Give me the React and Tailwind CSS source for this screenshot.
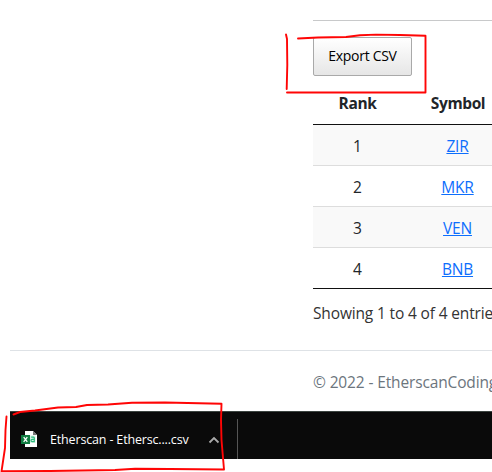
const rows = [
  { rank: 1, symbol: 'ZIR' },
  { rank: 2, symbol: 'MKR' },
  { rank: 3, symbol: 'VEN' },
  { rank: 4, symbol: 'BNB' },
];

function TokenTable() {
  return (
    <div className="w-[190px] border-b border-[#111]">
      <div className="flex h-[49px] items-center border-b border-[#111] pt-[5px] text-[15.5px] font-bold tracking-[-0.4px]">
        <div className="w-[89px] shrink-0 text-center">Rank</div>
        <div className="w-[112px] shrink-0 text-center">Symbol</div>
      </div>
      {rows.map((r, i) => (
        <div
          key={r.rank}
          className={`flex items-center ${i > 0 ? 'h-[41px] border-t border-[#dddddd] pt-px' : 'h-10 pt-0.5'} ${i % 2 === 0 ? 'bg-[#f9f9f9]' : 'bg-white'}`}
        >
          <div className="w-[89px] shrink-0 text-center">{r.rank}</div>
          <div className="w-[111px] shrink-0 text-center tracking-[-0.2px]">
            <a href="#" className="text-[#0d6efd] underline decoration-1 underline-offset-1">{r.symbol}</a>
          </div>
        </div>
      ))}
    </div>
  );
}

function CsvIcon() {
  return (
    <svg width="17" height="17" viewBox="0 0 17 17" className="mt-[3px] shrink-0">
      <path d="M4 0h8l4 4v12H4z" fill="#fff" />
      <path d="M12 0v4h4z" fill="#777" />
      <rect x="9" y="4.500" width="5.500" height="7.500" fill="#d5f2e4" />
      <path d="M10.200 6.200h2.300q.8 0 .8.900v3.500h-2.200q-1.100 0-1.100-1.100t1.100-1.100h2.200" fill="none" stroke="#2dbb7c" strokeWidth="1.200" />
      <rect x="0" y="4" width="9" height="9" fill="#107c41" />
      <path d="M2.700 6.200l3.600 4.600M6.300 6.200l-3.600 4.600" stroke="#fff" strokeWidth="1.300" />
    </svg>
  );
}

function Annotations() {
  return (
    <svg className="pointer-events-none absolute left-0 top-0" width="492" height="472" fill="none" stroke="#ff0505" strokeWidth="1.900" strokeLinecap="round" strokeLinejoin="round">
      <path d="M298 38.500L318 37.500L346 37L360 35.300L376 34.600L400 35L425.500 35.700V92.500H287" />
      <path d="M286 34.500L287 39L287.300 65L286.700 89" />
      <path d="M13.500 414.500L20 412L35 410.500L58 407.500L76 407L87 405L108 404.500L132 402.700L165 402.500L221.500 403.700L221 420L221.500 440L224 469.500L170 469L135 468.800L115 470L50 471L1.500 471.300L5 448L5.500 430L6.500 416.500" />
    </svg>
  );
}

export default function App() {
  return (
    <div className="relative flex h-[472px] w-[492px] flex-col overflow-hidden bg-white font-['Open_Sans','Noto_Sans',sans-serif] text-[15.5px] leading-6 text-[#212529]">
      <main className="ml-[313px] h-[350px] overflow-hidden whitespace-nowrap pt-5">
        <div className="h-px bg-[#c8c9ca]" />
        <button className="mt-4 block h-[39px] w-[99px] rounded-[2px] border border-[#a9a9a9] bg-linear-to-b from-white to-[#e6e6e6] pb-0.5 text-[14px] tracking-[-0.3px] text-black">
          Export CSV
        </button>
        <TokenTable />
        <div className="mt-3 tracking-[-0.15px] text-[#333]">Showing 1 to 4 of 4 entries</div>
      </main>
      <footer className="ml-[10px] h-[61px] shrink-0 overflow-hidden whitespace-nowrap border-t border-[#dee2e6] pl-[303px] pt-[19px] tracking-[-0.14px] text-[#6c757d]">
        © 2022 - EtherscanCodingTest
      </footer>
      <div className="ml-[10px] flex h-12 shrink-0 items-center border-t border-[#3c4440] bg-[#0a0a0a] pl-[11px] pt-[7px] text-white">
        <div className="flex h-10 w-[217px] items-center border-r border-[#555]">
          <div className="flex items-center pb-[3px]">
            <CsvIcon />
            <span className="ml-3 w-[141px] whitespace-nowrap pt-1 text-[12.5px] tracking-[-0.16px]">Etherscan - Ethersc....csv</span>
            <svg width="12" height="8" viewBox="0 0 12 8" className="ml-[17px] mt-1" fill="none" stroke="#aaa" strokeWidth="1.800">
              <path d="M1.500 6.500L6 2l4.500 4.500" />
            </svg>
          </div>
        </div>
      </div>
      <Annotations />
    </div>
  );
}
